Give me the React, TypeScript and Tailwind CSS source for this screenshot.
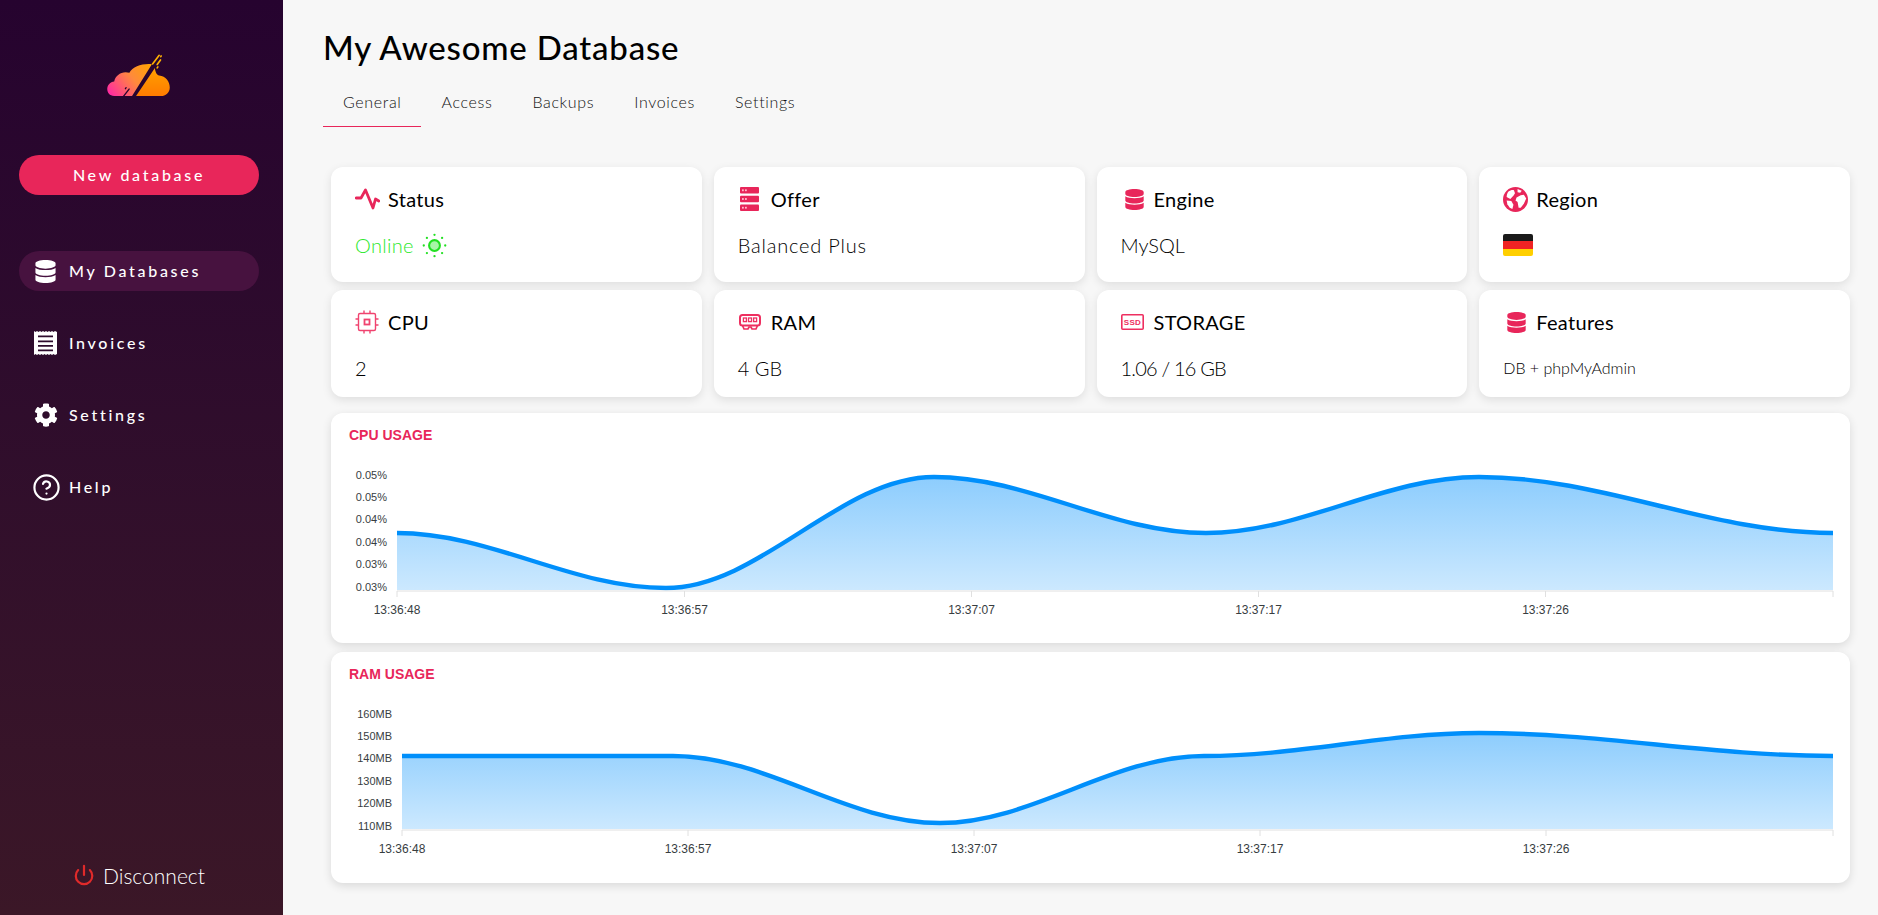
import React from "react";
import { FaDatabase, FaCog } from "react-icons/fa";
import { Power, CircleHelp } from "lucide-react";

const RED = "#e8265a";

function smooth(p: number[][]) {
  let d = `M${p[0][0]},${p[0][1]}`;
  for (let i = 0; i < p.length - 1; i++) {
    const b = p[i];
    const c = p[i + 1];
    const k = (c[0] - b[0]) * 0.35;
    d += ` C${b[0] + k},${b[1]} ${c[0] - k},${c[1]} ${c[0]},${c[1]}`;
  }
  return d;
}

function Logo() {
  return (
    <svg viewBox="55 40 195 130" className="w-[65px] h-[43px]">
      <defs>
        <linearGradient id="lg" gradientUnits="userSpaceOnUse" x1="70" y1="170" x2="190" y2="75">
          <stop offset="0" stopColor="#ff2ba0" />
          <stop offset="0.55" stopColor="#ff8a3c" />
          <stop offset="1" stopColor="#ffa300" />
        </linearGradient>
        <linearGradient id="lr" gradientUnits="userSpaceOnUse" x1="0" y1="70" x2="0" y2="170">
          <stop offset="0" stopColor="#ffa600" />
          <stop offset="1" stopColor="#ff7a00" />
        </linearGradient>
      </defs>
      <path
        d="M76,167 C62,167 55,157 55,146 C55,134 64,124 76,123 C80,104 100,90 122,97 C132,78 162,68 190,71 L130,167 Z"
        fill="url(#lg)"
      />
      <path
        d="M142,167 L199,82 C200,94 205,104 212,105 C232,106 244,124 244,141 C244,157 231,167 218,167 Z"
        fill="url(#lr)"
      />
      <path d="M212,44 L192,70 M216,58 L206,72 M218,46 L217,48 M206,82 L208,79" stroke="#ffb000" strokeWidth="5" strokeLinecap="round" />
      <path d="M121,146 L104,168 M112,142 L110,145" stroke="#27032f" strokeWidth="4" strokeLinecap="round" />
    </svg>
  );
}

function InvoiceIcon() {
  return (
    <svg viewBox="0 0 23 24" className="w-[23px] h-[24px]">
      <path
        fill="#fff"
        fillRule="evenodd"
        d="M0,0 L1.5,1 L3,0 L4.5,1 L6,0 L7.5,1 L9,0 L10.5,1 L12,0 L13.5,1 L15,0 L16.5,1 L18,0 L19.5,1 L21,0 L23,1 L23,23 L21,24 L19.5,23 L18,24 L16.5,23 L15,24 L13.5,23 L12,24 L10.5,23 L9,24 L7.5,23 L6,24 L4.5,23 L3,24 L1.5,23 L0,24 Z
        M4,4.5 H19 V6.2 H4 Z M4,9.5 H19 V11.2 H4 Z M4,14 H19 V15.7 H4 Z M4,18.5 H19 V20.2 H4 Z"
      />
    </svg>
  );
}

function GlobeIcon() {
  return (
    <svg viewBox="0 0 24 24" className="w-[25px] h-[25px]">
      <circle cx="12" cy="12" r="12" fill={RED} />
      <path fill="#fff" d="M5,4.5 C7,3 9,2.5 10.5,3 L11.5,6 L10,8.5 L7,11.5 L3.5,9.5 C3.5,8 4,6 5,4.5 Z" />
      <path fill="#fff" d="M14,2 L18,3.5 L16.5,5.5 L14,5 Z" />
      <path fill="#fff" d="M13,10 L17,8 L20,7.5 L22.3,11 L20,16 L17,20 L15,20 L14,14.5 L12,13 Z" />
      <path fill="#fff" d="M3.5,13 L8,13.5 L10,17 L9,21 L6.5,20 L4.2,16.5 Z" />
    </svg>
  );
}

function Nav({ icon, label, active }: { icon: React.ReactNode; label: string; active?: boolean }) {
  return (
    <div
      className={
        "w-[240px] h-10 rounded-full flex items-center text-white text-[16px] font-medium tracking-[2.7px] " +
        (active ? "bg-[#47123f]" : "")
      }
    >
      <span className="w-[50px] pl-[15px] flex items-center shrink-0">{icon}</span>
      <span>{label}</span>
    </div>
  );
}

function Sidebar() {
  return (
    <aside className="w-[283px] shrink-0 h-full flex flex-col items-center pt-[54px] pr-[5px] pb-[24px] bg-gradient-to-b from-[#26032f] to-[#3b1727] font-['Lato',sans-serif]">
      <Logo />
      <button className="mt-[58px] w-[240px] h-10 rounded-full bg-[#e8265a] text-white text-[16px] font-medium tracking-[2.7px]">
        New database
      </button>
      <nav className="mt-[56px] flex flex-col gap-8">
        <Nav active label="My Databases" icon={<FaDatabase size={23} color="#fff" />} />
        <Nav label="Invoices" icon={<InvoiceIcon />} />
        <Nav label="Settings" icon={<FaCog size={24} color="#fff" />} />
        <Nav label="Help" icon={<CircleHelp size={29} strokeWidth={1.8} color="#fff" className="-ml-[2px]" />} />
      </nav>
      <div className="mt-auto flex items-center gap-[8px] text-white text-[21px] font-light">
        <Power size={22} strokeWidth={2.4} color="#e02a2a" />
        <span>Disconnect</span>
      </div>
    </aside>
  );
}

function ActivityIcon() {
  return (
    <svg viewBox="0 0 25 22" className="w-[25px] h-[22px]" fill="none" stroke={RED} strokeWidth="2.8" strokeLinecap="round" strokeLinejoin="round">
      <path d="M1.2,10 H6 L10.5,2 L18,20 L20.5,11 L23.8,13" />
    </svg>
  );
}

function ServerIcon() {
  return (
    <svg viewBox="0 0 19 24" className="w-[19px] h-[24px] ml-[2px]">
      {[0, 8.7, 17.4].map((y) => (
        <g key={y}>
          <rect x="0" y={y} width="19" height="6.6" rx="1" fill={RED} />
          <rect x="2" y={y + 2.4} width="1.8" height="1.8" fill="#fbc" />
          <rect x="5" y={y + 2.4} width="1.8" height="1.8" fill="#fbc" />
        </g>
      ))}
    </svg>
  );
}

function CpuIcon() {
  return (
    <svg viewBox="0 0 24 24" className="w-[24px] h-[24px]" fill="none" stroke="#f0436f" strokeWidth="1.4">
      <rect x="3.5" y="3.5" width="17" height="17" rx="1.5" />
      <rect x="9.5" y="9.5" width="5" height="5" strokeWidth="1.8" />
      <path d="M9,0.5 V3 M15,0.5 V3 M9,21 V23.5 M15,21 V23.5 M0.5,9 H3 M0.5,15 H3 M21,9 H23.5 M21,15 H23.5" />
    </svg>
  );
}

function RamIcon() {
  return (
    <svg viewBox="0 0 22 16" className="w-[22px] h-[16px] ml-[1px]" fill="none" stroke="#ee2f60" strokeWidth="2">
      <rect x="1" y="1" width="20" height="10.5" rx="2.5" />
      <rect x="4.4" y="4" width="3" height="3.6" strokeWidth="1.3" />
      <rect x="9.5" y="4" width="3" height="3.6" strokeWidth="1.3" />
      <rect x="14.6" y="4" width="3" height="3.6" strokeWidth="1.3" />
      <path d="M3.5,11.5 L5,15 H9 L10,13 H12 L13,15 H17 L18.5,11.5" strokeWidth="1.7" />
    </svg>
  );
}

function SsdIcon() {
  return (
    <svg viewBox="0 0 23 16" className="w-[23px] h-[16px]">
      <rect x="0.8" y="0.8" width="21.4" height="14.4" rx="1" fill="none" stroke="#ee2f60" strokeWidth="1.6" />
      <text x="11.5" y="11" textAnchor="middle" fontSize="8" fontWeight="700" fontFamily="'Liberation Sans',sans-serif" fill="#ee2f60">
        SSD
      </text>
    </svg>
  );
}

function SunIcon() {
  const d = [0, 45, 90, 135, 180, 225, 270, 315];
  return (
    <svg viewBox="0 0 24 24" className="w-[25px] h-[25px] ml-[8px]">
      <circle cx="12" cy="12" r="5.2" fill="#a8f5a8" stroke="#22e022" strokeWidth="2" />
      {d.map((a) => (
        <circle
          key={a}
          cx={12 + 10.3 * Math.cos((a * Math.PI) / 180)}
          cy={12 + 10.3 * Math.sin((a * Math.PI) / 180)}
          r="1.1"
          fill="#22e022"
        />
      ))}
    </svg>
  );
}

function Flag() {
  return (
    <div className="w-[30px] h-[22px] rounded-[2px] overflow-hidden flex flex-col">
      <div className="flex-1 bg-[#1a1a1a]" />
      <div className="flex-1 bg-[#ef2424]" />
      <div className="flex-1 bg-[#ffcf00]" />
    </div>
  );
}

function Card({
  icon,
  title,
  children,
  h,
  valueClass,
}: {
  icon: React.ReactNode;
  title: string;
  children: React.ReactNode;
  h: string;
  valueClass?: string;
}) {
  return (
    <div className={"bg-white rounded-xl shadow-[0_3px_10px_rgba(0,0,0,0.1)] pl-6 pt-[18px] " + h}>
      <div className="h-7 flex items-center text-[20px] font-normal tracking-[0.3px] text-black">
        <span className="w-[33px] shrink-0 flex items-center">{icon}</span>
        <span>{title}</span>
      </div>
      <div className={"mt-[18px] h-7 flex items-center font-light text-black " + (valueClass ?? "text-[20px]")}>
        {children}
      </div>
    </div>
  );
}

type Chart = {
  id: string;
  title: string;
  top: number;
  height: string;
  viewH: number;
  left: number;
  base: number;
  labelX: number;
  labelY: number[];
  yLabels: string[];
  points: number[][];
  ticks: number[];
};

function UsageChart({ c }: { c: Chart }) {
  const line = smooth(c.points);
  const last = c.points[c.points.length - 1];
  const area = `${line} L${last[0]},${c.base} L${c.left},${c.base} Z`;
  const minY = Math.min(...c.points.map((p) => p[1]));
  const font = "'Liberation Sans',Arial,sans-serif";
  return (
    <div className={"bg-white rounded-xl shadow-[0_3px_10px_rgba(0,0,0,0.12)] " + c.height}>
      <svg viewBox={`331 ${c.top} 1519 ${c.viewH}`} className="w-full h-full block">
        <defs>
          <linearGradient id={c.id} gradientUnits="userSpaceOnUse" x1="0" y1={minY} x2="0" y2={c.base}>
            <stop offset="0" stopColor="#008ffb" stopOpacity="0.45" />
            <stop offset="1" stopColor="#008ffb" stopOpacity="0.2" />
          </linearGradient>
        </defs>
        <text x="349" y={c.top + 27} fontSize="14" fontWeight="700" fontFamily={font} fill={RED}>
          {c.title}
        </text>
        {c.yLabels.map((t, i) => (
          <text key={i} x={c.labelX} y={c.labelY[i] + 4} textAnchor="end" fontSize="11" fontFamily={font} fill="#373d3f">
            {t}
          </text>
        ))}
        <path d={area} fill={`url(#${c.id})`} />
        <path d={line} fill="none" stroke="#008ffb" strokeWidth="4.4" />
        <path d={`M${c.left},${c.base + 1} H${last[0]}`} stroke="#e0e0e0" strokeWidth="1" />
        {c.ticks.map((x) => (
          <path key={x} d={`M${x},${c.base + 1} v6`} stroke="#e0e0e0" strokeWidth="1" />
        ))}
        {c.ticks.slice(0, 5).map((x, i) => (
          <text key={x} x={x} y={c.base + 24} textAnchor="middle" fontSize="12" fontFamily={font} fill="#373d3f">
            {["13:36:48", "13:36:57", "13:37:07", "13:37:17", "13:37:26"][i]}
          </text>
        ))}
      </svg>
    </div>
  );
}

const cpu: Chart = {
  id: "cpuFill",
  title: "CPU USAGE",
  top: 413,
  height: "h-[230px]",
  viewH: 230,
  left: 397,
  base: 590,
  labelX: 387,
  labelY: [475, 497, 519, 542, 564, 587],
  yLabels: ["0.05%", "0.05%", "0.04%", "0.04%", "0.03%", "0.03%"],
  points: [
    [397, 533],
    [666, 588],
    [934, 477],
    [1206, 533],
    [1479, 477],
    [1833, 533],
  ],
  ticks: [397, 684.5, 971.5, 1258.5, 1545.5, 1833],
};

const ram: Chart = {
  id: "ramFill",
  title: "RAM USAGE",
  top: 652,
  height: "h-[231px]",
  viewH: 231,
  left: 402,
  base: 829,
  labelX: 392,
  labelY: [714, 736, 758, 781, 803, 826],
  yLabels: ["160MB", "150MB", "140MB", "130MB", "120MB", "110MB"],
  points: [
    [402, 756],
    [673, 756],
    [940, 823],
    [1204, 756],
    [1479, 733],
    [1833, 756],
  ],
  ticks: [402, 688, 974, 1260, 1546, 1833],
};

export default function App() {
  return (
    <div className="flex h-[915px] w-full bg-[#f7f7f7] overflow-hidden font-['Lato',sans-serif]">
      <Sidebar />
      <main className="flex-1 min-w-0">
        <h1 className="ml-[40px] mt-[26px] h-[42px] leading-[42px] text-[33px] font-medium tracking-[0.8px] text-black">My Awesome Database</h1>
        <div className="ml-10 mt-[17px] flex h-[42px] text-[16px] font-light tracking-[0.65px] text-[#111]">
          <div className="px-5 pt-[5px] border-b border-[#e8265a]">General</div>
          <div className="px-5 pt-[5px]">Access</div>
          <div className="px-5 pt-[5px]">Backups</div>
          <div className="px-5 pt-[5px]">Invoices</div>
          <div className="px-5 pt-[5px]">Settings</div>
        </div>
        <div className="ml-[48px] mr-[28px] mt-[40px]">
          <div className="grid grid-cols-4 gap-x-3 gap-y-2">
            <Card h="h-[115px]" icon={<ActivityIcon />} title="Status">
              <span className="text-[#2ee82e] tracking-[0.3px]">Online</span>
              <SunIcon />
            </Card>
            <Card h="h-[115px]" icon={<ServerIcon />} title="Offer" valueClass="text-[20px] tracking-[0.8px]">
              Balanced Plus
            </Card>
            <Card h="h-[115px]" icon={<FaDatabase size={21} color={RED} className="ml-[3px]" />} title="Engine">
              MySQL
            </Card>
            <Card h="h-[115px]" icon={<GlobeIcon />} title="Region">
              <Flag />
            </Card>
            <Card h="h-[107px]" icon={<CpuIcon />} title="CPU">
              2
            </Card>
            <Card h="h-[107px]" icon={<RamIcon />} title="RAM">
              4 GB
            </Card>
            <Card h="h-[107px]" icon={<SsdIcon />} title="STORAGE" valueClass="text-[20px] tracking-[-0.8px]">
              1.06 / 16 GB
            </Card>
            <Card h="h-[107px]" icon={<FaDatabase size={21} color={RED} className="ml-[3px]" />} title="Features" valueClass="text-[16px]">
              DB + phpMyAdmin
            </Card>
          </div>
          <div className="mt-4 flex flex-col gap-[9px]">
            <UsageChart c={cpu} />
            <UsageChart c={ram} />
          </div>
        </div>
      </main>
    </div>
  );
}
